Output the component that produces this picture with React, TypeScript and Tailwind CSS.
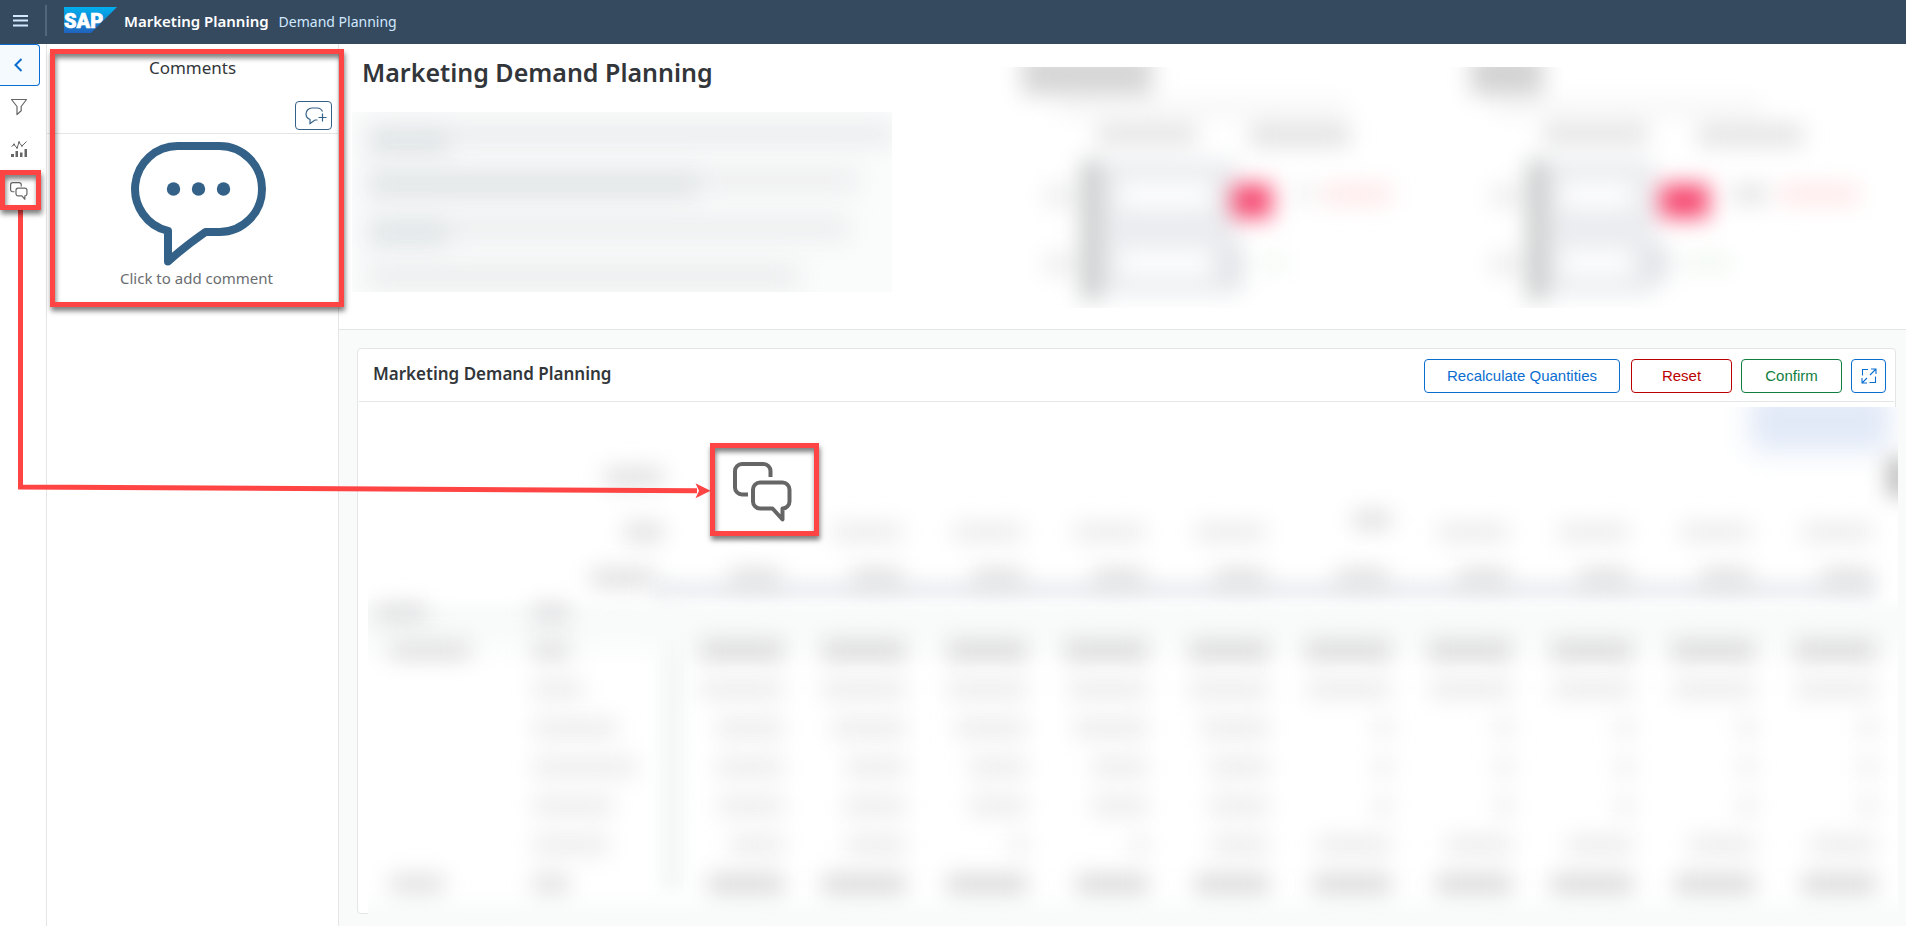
import React from "react";

const UI_FONT = "font-['Noto_Sans','Open_Sans',sans-serif]";

function SapLogo() {
  return (
    <svg width="53" height="26" viewBox="0 0 53 26" role="img" aria-label="SAP">
      <defs>
        <linearGradient id="sap-fill" x1="0" y1="0" x2="0" y2="1">
          <stop offset="0" stopColor="#00b0ee" />
          <stop offset="1" stopColor="#2163bd" />
        </linearGradient>
      </defs>
      <path d="M0 0H53L27 26H0Z" fill="url(#sap-fill)" />
      <text
        x="0"
        y="20.5"
        fill="#fff"
        stroke="#fff"
        strokeWidth="0.6"
        fontSize="20"
        fontWeight="900"
        fontFamily="Roboto, 'Liberation Sans', sans-serif"
      >
        SAP
      </text>
    </svg>
  );
}

function DiscussionIcon({ size }: { size: number }) {
  return (
    <svg width={size} height={size} viewBox="0 0 60 60" fill="none" stroke="#666" strokeWidth="4" strokeLinejoin="round" aria-hidden="true">
      <path d="M15 32.500H9a7 7 0 0 1-7-7V9a7 7 0 0 1 7-7H30.500a7 7 0 0 1 7 7V15" />
      <path d="M49.500 46.500V57.500L39.500 46.500H27a7 7 0 0 1-7-7V27.500a7 7 0 0 1 7-7H49.500a7 7 0 0 1 7 7V39.500a7 7 0 0 1-7 7Z" />
    </svg>
  );
}

function FilterIcon() {
  return (
    <svg width="18" height="18" viewBox="0 0 18 18" fill="none" stroke="#666" strokeWidth="1.200" strokeLinejoin="round" aria-hidden="true">
      <path d="M1.500 1.500H16.500L11.200 8.500V12.800L7 16.500V8.500Z" />
    </svg>
  );
}

function ChartIcon() {
  return (
    <svg width="18" height="18" viewBox="0 0 18 18" fill="none" aria-hidden="true">
      <path d="M1.500 6.500L4 4.500L7 8L9 2.500L12 6L16.500 1.500" stroke="#666" strokeWidth="1" />
      <circle cx="4" cy="4.500" r="1" fill="#666" />
      <circle cx="7" cy="7.700" r="1" fill="#666" />
      <circle cx="9" cy="2.200" r="1" fill="#666" />
      <circle cx="12" cy="5.800" r="1" fill="#666" />
      <path d="M1 14H4V17H1ZM5.500 11H8V17H5.500ZM10 12.500H12.500V17H10ZM14.500 9H17V17H14.500Z" fill="#666" />
    </svg>
  );
}

function AddCommentIcon() {
  return (
    <svg width="22" height="18" viewBox="0 0 22 18" fill="none" stroke="#346187" strokeWidth="1.200" className="ml-1" aria-hidden="true">
      <path d="M17.500 4.500C16.500 2.200 14.500 1 12 1H7A6 6 0 0 0 1 7C1 9.500 2.500 11.500 5 12.500V16.500L10 13H12.500" />
      <path d="M17.500 6.500V14.500M13.500 10.500H21.500" />
    </svg>
  );
}

function CommentBubble() {
  return (
    <svg width="135" height="124" viewBox="131 142 135 124" fill="none" stroke="#346187" strokeWidth="8" strokeLinejoin="round" className="overflow-visible" aria-hidden="true">
      <path d="M205.500 232H219.500A42.500 43 0 0 0 219.500 146H177.500A42.500 43 0 0 0 168 230.900V261.500Q184 247 205.500 232Z" />
      <g fill="#346187" stroke="none">
        <circle cx="173.500" cy="189" r="6.700" />
        <circle cx="198.500" cy="189" r="6.700" />
        <circle cx="223.500" cy="189" r="6.700" />
      </g>
    </svg>
  );
}

function ExpandIcon() {
  return (
    <svg width="16" height="16" viewBox="0 0 16 16" fill="none" stroke="#0a6ed1" strokeWidth="1.100" aria-hidden="true">
      <path d="M10 1H15V6M15 1L9 7" />
      <path d="M6 15H1V10M1 15L6 10" />
      <path d="M7 1.500H1.500V7.500M14.500 8.500V14.500H8.500" />
    </svg>
  );
}

type ChartShape = { x: number; y: number; w: number; h: number; fill: string };

function BlurredChart({ id, shapes }: { id: string; shapes: ChartShape[] }) {
  return (
    <svg width="440" height="241" viewBox="0 0 440 241" className="mt-[23px] max-w-full" aria-hidden="true">
      <defs>
        <filter id={id} x="-20%" y="-20%" width="140%" height="140%" colorInterpolationFilters="sRGB">
          <feGaussianBlur stdDeviation="11" />
        </filter>
      </defs>
      <g filter={`url(#${id})`}>
        {shapes.map((s, i) => (
          <rect key={i} x={s.x} y={s.y} width={s.w} height={s.h} fill={s.fill} />
        ))}
      </g>
    </svg>
  );
}

const demandShapes: ChartShape[] = [
  { x: 25, y: -14, w: 130, h: 42, fill: "#d6d6d6" },
  { x: 60, y: 34, w: 290, h: 14, fill: "#f5f5f5" },
  { x: 100, y: 56, w: 100, h: 22, fill: "#e5e5e5" },
  { x: 253, y: 56, w: 100, h: 24, fill: "#e3e3e3" },
  { x: 102, y: 93, w: 138, h: 135, fill: "#eaecef" },
  { x: 122, y: 114, w: 92, h: 28, fill: "#fdfdfe" },
  { x: 122, y: 182, w: 92, h: 28, fill: "#fdfdfe" },
  { x: 84, y: 93, w: 20, h: 140, fill: "#c9cbcb" },
  { x: 228, y: 178, w: 18, h: 42, fill: "#e0e2e6" },
  { x: 235, y: 117, w: 40, h: 34, fill: "#f64970" },
  { x: 298, y: 118, w: 20, h: 18, fill: "#f0f0f0" },
  { x: 326, y: 116, w: 68, h: 22, fill: "#ffeaeb" },
  { x: 48, y: 118, w: 28, h: 22, fill: "#eeeeee" },
  { x: 48, y: 186, w: 28, h: 22, fill: "#eeeeee" },
  { x: 262, y: 186, w: 32, h: 20, fill: "#f5faf6" },
];

const budgetShapes: ChartShape[] = [
  { x: 28, y: -14, w: 72, h: 42, fill: "#d3d3d3" },
  { x: 50, y: 34, w: 270, h: 14, fill: "#f5f5f5" },
  { x: 100, y: 56, w: 105, h: 22, fill: "#e5e5e5" },
  { x: 255, y: 56, w: 105, h: 24, fill: "#e5e5e5" },
  { x: 100, y: 93, w: 112, h: 135, fill: "#eaecef" },
  { x: 118, y: 114, w: 72, h: 28, fill: "#fdfdfe" },
  { x: 118, y: 182, w: 72, h: 28, fill: "#fdfdfe" },
  { x: 84, y: 93, w: 20, h: 140, fill: "#c9cbcb" },
  { x: 200, y: 178, w: 26, h: 36, fill: "#e2e4e8" },
  { x: 217, y: 117, w: 49, h: 34, fill: "#f64970" },
  { x: 290, y: 117, w: 34, h: 20, fill: "#e5e5e7" },
  { x: 336, y: 116, w: 80, h: 22, fill: "#ffeaeb" },
  { x: 48, y: 118, w: 30, h: 22, fill: "#eeeeee" },
  { x: 48, y: 186, w: 30, h: 22, fill: "#eeeeee" },
  { x: 240, y: 186, w: 50, h: 20, fill: "#f3f9f4" },
];

function BlurredSummary() {
  return (
    <div aria-hidden="true" className="ml-[13px] mt-6 flex h-[180px] w-[540px] max-w-full flex-col gap-4 overflow-hidden bg-[#fafbfb] pl-4 pt-3">
      <div className="flex h-7 shrink-0 items-start blur-[11px]">
        <div className="h-8 w-[80px] bg-[#e2e6e8]" />
        <div className="h-5 flex-1 bg-[#e9ebed]" />
      </div>
      <div className="flex h-8 shrink-0 items-start blur-[11px]">
        <div className="h-8 w-[330px] bg-[#e4e7e9]" />
        <div className="h-6 w-[160px] bg-[#eeeff0]" />
      </div>
      <div className="flex h-8 shrink-0 items-start blur-[11px]">
        <div className="h-8 w-[80px] bg-[#e3e7e9]" />
        <div className="h-6 w-[400px] bg-[#edeeef]" />
      </div>
      <div className="h-6 w-[430px] shrink-0 bg-[#ecedee] blur-[11px]" />
    </div>
  );
}

type Tone = "head" | "strong" | "normal";

function Smudge({ width, tone }: { width: number; tone: Tone }) {
  const color = tone === "strong" ? "bg-[#d6d6d6]" : tone === "head" ? "bg-[#dededf]" : "bg-[#ebebeb]";
  return <div className={`h-[18px] shrink-0 blur-[11px] ${color}`} style={{ width }} />;
}

type PlanRow = { key: string; first: number; label: number; tone: Tone; values: number[] };

const planRows: PlanRow[] = [
  { key: "total", first: 80, label: 36, tone: "strong", values: [84, 84, 80, 84, 80, 86, 84, 82, 84, 82] },
  { key: "r1", first: 0, label: 50, tone: "normal", values: [84, 84, 80, 80, 80, 84, 82, 80, 82, 80] },
  { key: "r2", first: 0, label: 84, tone: "normal", values: [68, 74, 72, 74, 68, 16, 16, 16, 16, 16] },
  { key: "r3", first: 0, label: 104, tone: "normal", values: [68, 60, 58, 56, 60, 16, 16, 16, 16, 16] },
  { key: "r4", first: 0, label: 80, tone: "normal", values: [66, 62, 58, 56, 60, 16, 16, 16, 16, 16] },
  { key: "r5", first: 0, label: 76, tone: "normal", values: [54, 60, 16, 16, 58, 74, 66, 66, 66, 66] },
  { key: "sum", first: 54, label: 36, tone: "strong", values: [76, 84, 80, 72, 74, 78, 76, 82, 80, 74] },
];

const columns = [0, 1, 2, 3, 4, 5, 6, 7, 8, 9];

function PlanningGrid() {
  return (
    <div className="relative" aria-hidden="true">
      <div className="absolute left-[285px] right-[22px] top-[130px] h-5 bg-[#eceef2] blur-[9px]" />
      <div className="absolute bottom-3 left-[292px] top-[150px] w-6 bg-[#f5f6f6] blur-[8px]" />
      <table className="relative w-full table-fixed border-collapse">
        <colgroup>
          <col className="w-[165px]" />
          <col className="w-[130px]" />
          {columns.map((c) => (
            <col key={c} />
          ))}
          <col className="w-[22px]" />
        </colgroup>
        <thead>
          <tr className="h-[54px]">
            <td />
            <td><div className="flex justify-end"><Smudge width={58} tone="head" /></div></td>
            <td colSpan={11} />
          </tr>
          <tr className="h-[56px]">
            <td />
            <td><div className="flex justify-end"><Smudge width={38} tone="head" /></div></td>
            {columns.map((c) => (
              <td key={c}>
                <div className={c === 5 ? "flex justify-end pb-6" : "flex justify-end pr-1"}>
                  {c > 0 && <Smudge width={c === 5 ? 38 : 70} tone={c === 5 ? "head" : "normal"} />}
                </div>
              </td>
            ))}
            <td />
          </tr>
          <tr className="h-[36px]">
            <td />
            <td><div className="flex justify-end pr-2"><Smudge width={64} tone="head" /></div></td>
            {columns.map((c) => (
              <td key={c}>
                <div className="flex justify-end pr-1"><Smudge width={50} tone="head" /></div>
              </td>
            ))}
            <td />
          </tr>
          <tr className="h-[34px] bg-linear-to-b from-[#fafbfb]/0 to-[#f9fafa] to-50%">
            <td><div className="pl-2"><Smudge width={50} tone="head" /></div></td>
            <td><Smudge width={36} tone="head" /></td>
            <td colSpan={11} />
          </tr>
        </thead>
        <tbody>
          {planRows.map((row, index) => (
            <tr
              key={row.key}
              className={
                index === 0
                  ? "h-[39px] bg-linear-to-b from-[#f9fafa] to-[#f9fafa]/0"
                  : "h-[39px]"
              }
            >
              <td><div className="pl-[22px]">{row.first > 0 && <Smudge width={row.first} tone="head" />}</div></td>
              <td><Smudge width={row.label} tone={row.tone === "strong" ? "head" : "normal"} /></td>
              {row.values.map((w, i) => (
                <td key={i}>
                  <div className="flex justify-end"><Smudge width={w} tone={row.tone} /></div>
                </td>
              ))}
              <td />
            </tr>
          ))}
        </tbody>
      </table>
    </div>
  );
}

function Annotations() {
  const frame = "absolute border-5 border-[#ff4444] shadow-[1px_4px_5px_rgba(0,0,0,0.5),inset_1px_4px_5px_rgba(0,0,0,0.5)]";
  return (
    <div className="pointer-events-none absolute inset-0" aria-hidden="true">
      <svg width="720" height="520" className="absolute left-0 top-0">
        <path d="M20.500 208V487L697 490.800" fill="none" stroke="#ff4444" strokeWidth="5" />
        <path d="M710.500 490.800L695.500 483.300L699 490.800L695.500 498.300Z" fill="#ff4444" />
      </svg>
      <div className={`${frame} left-[50px] top-[49px] h-[258px] w-[294px]`} />
      <div className={`${frame} left-0 top-[170px] h-[40px] w-[41px]`} />
      <div className={`${frame} left-[710px] top-[443px] flex h-[93px] w-[109px] items-center justify-center bg-white pr-1 pt-1`}>
        <DiscussionIcon size={60} />
      </div>
    </div>
  );
}

export default function App() {
  const railButton = "flex h-[42px] w-10 items-center justify-center pr-[2px]";
  const action = "h-[34px] rounded border bg-white font-['Liberation_Sans',sans-serif] text-[15px]";
  return (
    <div className={`relative flex min-h-screen flex-col overflow-hidden bg-white text-[#32363a] ${UI_FONT}`}>
      <header className="flex h-11 shrink-0 items-center bg-[#354a5f]">
        <button type="button" aria-label="Menu" className="flex h-11 w-[45px] items-center pb-[2px] pl-[13px]">
          <svg width="15" height="12" viewBox="0 0 15 12" fill="#d1e8ff" aria-hidden="true">
            <path d="M0 0H15V2H0ZM0 4.500H15V6.500H0ZM0 9.500H15V11.500H0Z" />
          </svg>
        </button>
        <div className="mb-1 mr-[17px] h-[31px] w-[2px] bg-[#53677c]" />
        <div className="pb-1"><SapLogo /></div>
        <span className="ml-[7px] pb-[2px] text-[15px] font-semibold text-white">Marketing Planning</span>
        <a href="#demand" className="ml-[10px] pb-[2px] text-[14px] text-[#d1e8ff]">Demand Planning</a>
      </header>

      <div className="flex flex-1">
        <nav className="w-[47px] shrink-0 border-r border-[#e5e5e5]">
          <button type="button" aria-label="Collapse panel" className={`${railButton} rounded-r border border-l-0 border-[#0a6ed1] bg-[#f5faff]`}>
            <svg width="9" height="14" viewBox="0 0 9 14" fill="none" stroke="#0a6ed1" strokeWidth="2" aria-hidden="true">
              <path d="M7.500 1L1.500 7L7.500 13" />
            </svg>
          </button>
          <button type="button" aria-label="Filters" className={railButton}><FilterIcon /></button>
          <button type="button" aria-label="Charts" className={railButton}><ChartIcon /></button>
          <button type="button" aria-label="Comments" className={railButton}><DiscussionIcon size={18} /></button>
        </nav>

        <aside className="w-[292px] shrink-0 border-r border-[#e5e5e5]">
          <div className="flex h-[90px] flex-col justify-between border-b border-[#e5e5e5] pb-[3px] pt-3">
            <h2 className="text-center text-[17px] leading-6">Comments</h2>
            <button type="button" aria-label="Add comment" className="mr-[6px] flex h-[29px] w-[37px] items-center justify-center self-end rounded border border-[#346187]">
              <AddCommentIcon />
            </button>
          </div>
          <button type="button" className="flex w-full flex-col items-center pl-3 pt-2 text-[15px] text-[#6a6d70]">
            <CommentBubble />
            <span className="pr-1 leading-6">Click to add comment</span>
          </button>
        </aside>

        <main className="flex min-w-0 flex-1 flex-col overflow-hidden bg-[#f9fbfb]">
          <section className="grid h-[286px] shrink-0 grid-cols-[658fr_446fr_463fr] border-b border-[#e3e5e6] bg-white">
            <div>
              <h1 className="ml-[23px] mt-3 text-[25px] font-semibold leading-8">Marketing Demand Planning</h1>
              <BlurredSummary />
            </div>
            <BlurredChart id="soft-demand" shapes={demandShapes} />
            <BlurredChart id="soft-budget" shapes={budgetShapes} />
          </section>

          <section className="mb-3 ml-[18px] mr-[10px] mt-[18px] flex flex-1 flex-col rounded border border-[#e3e5e6] bg-white">
            <div className="mx-px flex h-[53px] items-center border-b border-[#e3e5e6] pl-[14px] pr-2 pt-[2px]">
              <h2 className="flex-1 pb-1 text-[17px] font-semibold">Marketing Demand Planning</h2>
              <button type="button" className={`${action} mr-[11px] w-[196px] border-[#0a6ed1] text-[#0a6ed1]`}>Recalculate Quantities</button>
              <button type="button" className={`${action} mr-[9px] w-[101px] border-[#bb0000] text-[#bb0000]`}>Reset</button>
              <button type="button" className={`${action} mr-[9px] w-[101px] border-[#107e3e] text-[#107e3e]`}>Confirm</button>
              <button type="button" aria-label="Full screen" className="flex h-[34px] w-[35px] items-center justify-center rounded border border-[#0a6ed1] bg-white">
                <ExpandIcon />
              </button>
            </div>
            <div className="relative -mb-[13px] -mr-[3px] ml-[10px] mt-[5px] flex-1 overflow-hidden bg-linear-to-b from-white from-93% to-[#f9fbfb] to-98%">
              <div aria-hidden="true" className="flex h-[43px] justify-end pr-2">
                <div className="-mt-4 h-[60px] w-[140px] shrink-0 bg-[#e1e9f7] blur-[14px]" />
              </div>
              <div aria-hidden="true" className="absolute -right-4 top-[50px] h-[40px] w-7 bg-[#c4c4c4] blur-[10px]" />
              <PlanningGrid />
            </div>
          </section>
        </main>
      </div>
      <Annotations />
    </div>
  );
}
